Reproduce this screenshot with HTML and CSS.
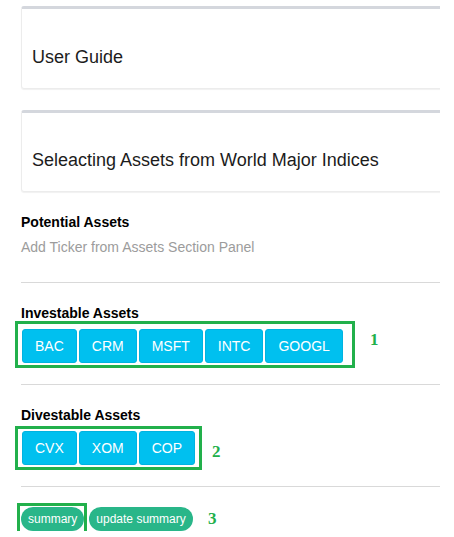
FILE: index.html
```html
<!DOCTYPE html>
<html>
<head>
<meta charset="utf-8">
<link rel="stylesheet" href="styles.css">
</head>
<body>
<div class="page">
  <div class="card"><div class="card-title">User Guide</div></div>
  <div class="card card-second"><div class="card-title">Seleacting Assets from World Major Indices</div></div>

  <div class="potential">
    <div class="sec-title">Potential Assets</div>
    <div class="hint">Add Ticker from Assets Section Panel</div>
  </div>
  <hr class="divider divider-first">

  <div class="section">
    <div class="sec-title">Investable Assets</div>
    <div class="btn-row">
      <button class="btn">BAC</button>
      <button class="btn">CRM</button>
      <button class="btn">MSFT</button>
      <button class="btn">INTC</button>
      <button class="btn">GOOGL</button>
      <span class="mark mark-1"></span>
      <span class="num num-1">1</span>
    </div>
  </div>
  <hr class="divider">

  <div class="section">
    <div class="sec-title">Divestable Assets</div>
    <div class="btn-row">
      <button class="btn">CVX</button>
      <button class="btn">XOM</button>
      <button class="btn">COP</button>
      <span class="mark mark-2"></span>
      <span class="num num-2">2</span>
    </div>
  </div>
  <hr class="divider">

  <div class="pill-row">
    <button class="pill">summary</button>
    <button class="pill">update summary</button>
    <span class="mark mark-3"></span>
    <span class="num num-3">3</span>
  </div>
</div>
</body>
</html>
```

FILE: styles.css
```css
html, body {
  margin: 0;
  padding: 0;
  background: #fff;
}
body {
  font-family: "Liberation Sans", Arial, sans-serif;
  color: #111;
}
.page {
  width: 419px;
  padding: 6px 0 0 21px;
  overflow: hidden;
}
.card {
  box-sizing: border-box;
  width: 440px;
  height: 83px;
  border: 1px solid #ececec;
  border-top: 3px solid #d4d7dd;
  border-radius: 3px;
  box-shadow: 0 1px 1px rgba(0,0,0,0.06);
  padding: 36px 10px 0 10px;
  margin-bottom: 21px;
}
.card-second {
  height: 82px;
  padding-top: 35px;
  margin-bottom: 20px;
}
.card-title {
  font-size: 18px;
  line-height: 24px;
  color: #1c1c1c;
}
.sec-title {
  font-size: 14px;
  font-weight: bold;
  line-height: 20px;
  color: #000;
}
.hint {
  font-size: 14px;
  line-height: 20px;
  color: #9c9c9c;
  margin-top: 5px;
}
.divider {
  border: 0;
  border-top: 1px solid #d9d9d9;
  margin: 21px 0 20px 0;
  height: 0;
}
.divider-first {
  margin-top: 25px;
}
.section .btn-row {
  margin-top: 6px;
}
.btn-row {
  position: relative;
  display: flex;
  gap: 2px;
  padding-left: 1px;
}
.btn {
  font-family: "Liberation Sans", Arial, sans-serif;
  font-size: 14px;
  line-height: 20px;
  padding: 6px 12px;
  border: 1px solid #00b3e0;
  border-radius: 3px;
  background: #00c0ef;
  color: #fff;
  margin: 0;
}
.pill-row {
  position: relative;
  display: flex;
  gap: 5px;
}
.pill {
  font-family: "Liberation Sans", Arial, sans-serif;
  font-size: 12px;
  line-height: 16px;
  height: 24px;
  padding: 4px 7px;
  border: 0;
  border-radius: 12px;
  background: #29b689;
  color: #fff;
  margin: 0;
}
.mark {
  position: absolute;
  border: 3px solid #22b04b;
  box-sizing: border-box;
  pointer-events: none;
}
.mark-1 {
  left: -6px;
  top: -8px;
  width: 340px;
  height: 47px;
}
.mark-2 {
  left: -6px;
  top: -5px;
  width: 187px;
  height: 44px;
}
.mark-3 {
  left: -4px;
  top: -4px;
  width: 70px;
  height: 31px;
}
.num {
  position: absolute;
  font-family: "Liberation Serif", "Times New Roman", serif;
  font-weight: bold;
  font-size: 17px;
  line-height: 20px;
  color: #22b04b;
}
.num-1 {
  left: 349px;
  top: 1px;
}
.num-2 {
  left: 191px;
  top: 11px;
}
.num-3 {
  left: 187px;
  top: 2px;
}
```
